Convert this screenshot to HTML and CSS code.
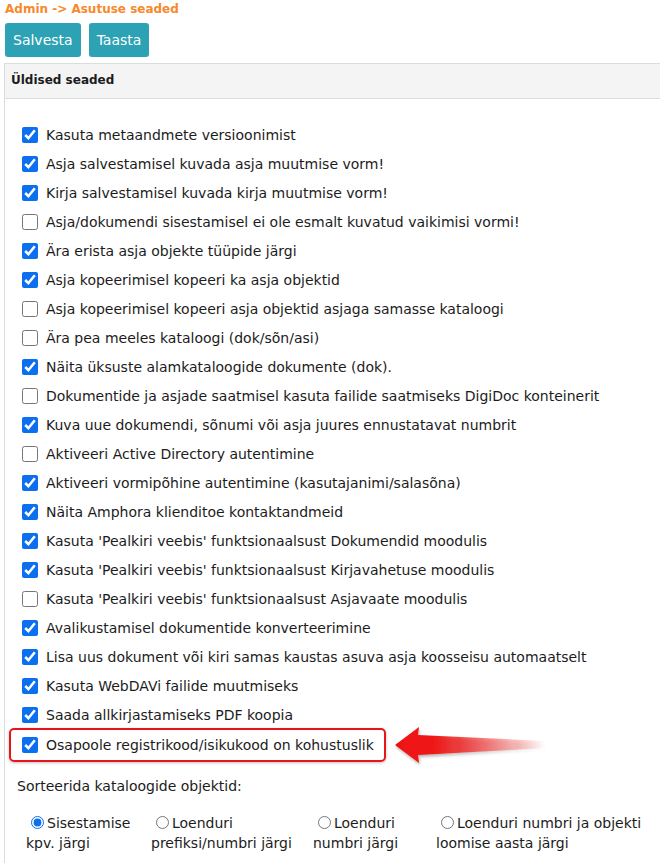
FILE: index.html
```html
<!DOCTYPE html>
<html lang="et">
<head>
    <meta charset="UTF-8">
    <title>Asutuse seaded</title>
    <link rel="stylesheet" href="styles.css">
</head>
<body>
    <div class="crumb">Admin -&gt; Asutuse seaded</div>

    <!-- nupud -->
    <div class="toolbar">
        <button class="btn">Salvesta</button>
        <button class="btn">Taasta</button>
    </div>

    <div class="panel">
        <div class="panel-head">Üldised seaded</div>
        <div class="panel-body">
            <ul class="opts">
                <li><label><input type="checkbox" checked> Kasuta metaandmete versioonimist</label></li>
                <li><label><input type="checkbox" checked> Asja salvestamisel kuvada asja muutmise vorm!</label></li>
                <li><label><input type="checkbox" checked> Kirja salvestamisel kuvada kirja muutmise vorm!</label></li>
                <li><label><input type="checkbox"> Asja/dokumendi sisestamisel ei ole esmalt kuvatud vaikimisi vormi!</label></li>
                <li><label><input type="checkbox" checked> Ära erista asja objekte tüüpide järgi</label></li>
                <li><label><input type="checkbox" checked> Asja kopeerimisel kopeeri ka asja objektid</label></li>
                <li><label><input type="checkbox"> Asja kopeerimisel kopeeri asja objektid asjaga samasse kataloogi</label></li>
                <li><label><input type="checkbox"> Ära pea meeles kataloogi (dok/sõn/asi)</label></li>
                <li><label><input type="checkbox" checked> Näita üksuste alamkataloogide dokumente (dok).</label></li>
                <li><label><input type="checkbox"> Dokumentide ja asjade saatmisel kasuta failide saatmiseks DigiDoc konteinerit</label></li>
                <li><label><input type="checkbox" checked> Kuva uue dokumendi, sõnumi või asja juures ennustatavat numbrit</label></li>
                <li><label><input type="checkbox"> Aktiveeri Active Directory autentimine</label></li>
                <li><label><input type="checkbox" checked> Aktiveeri vormipõhine autentimine (kasutajanimi/salasõna)</label></li>
                <li><label><input type="checkbox" checked> Näita Amphora klienditoe kontaktandmeid</label></li>
                <li><label><input type="checkbox" checked> Kasuta 'Pealkiri veebis' funktsionaalsust Dokumendid moodulis</label></li>
                <li><label><input type="checkbox" checked> Kasuta 'Pealkiri veebis' funktsionaalsust Kirjavahetuse moodulis</label></li>
                <li><label><input type="checkbox"> Kasuta 'Pealkiri veebis' funktsionaalsust Asjavaate moodulis</label></li>
                <li><label><input type="checkbox" checked> Avalikustamisel dokumentide konverteerimine</label></li>
                <li><label><input type="checkbox" checked> Lisa uus dokument või kiri samas kaustas asuva asja koosseisu automaatselt</label></li>
                <li><label><input type="checkbox" checked> Kasuta WebDAVi failide muutmiseks</label></li>
                <li><label><input type="checkbox" checked> Saada allkirjastamiseks PDF koopia</label></li>
                <li class="marked">
                    <label><input type="checkbox" checked> Osapoole registrikood/isikukood on kohustuslik</label>
                    <!-- punane nool -->
                    <svg class="arrow" width="160" height="50" viewBox="0 0 160 50">
                        <defs>
                            <linearGradient id="fade" x1="0" x2="1" y1="0" y2="0">
                                <stop offset="0" stop-color="#ee1111"/>
                                <stop offset="0.25" stop-color="#ee1515"/>
                                <stop offset="1" stop-color="#ee1515" stop-opacity="0"/>
                            </linearGradient>
                            <filter id="shade" x="-10%" y="-30%" width="130%" height="160%">
                                <feDropShadow dx="1" dy="2" stdDeviation="1.5" flood-color="#000" flood-opacity="0.3"/>
                            </filter>
                        </defs>
                        <path d="M2 25 L26 7 L25 15 L152 21 L152 28 L25 35 L26 43 Z" fill="url(#fade)" filter="url(#shade)"/>
                    </svg>
                </li>
            </ul>

            <div class="sort-title">Sorteerida kataloogide objektid:</div>

            <div class="sort-row">
                <label><input type="radio" name="sort" checked>Sisestamise kpv. järgi</label>
                <label><input type="radio" name="sort">Loenduri prefiksi/numbri järgi</label>
                <label><input type="radio" name="sort">Loenduri numbri järgi</label>
                <label><input type="radio" name="sort">Loenduri numbri ja objekti loomise aasta järgi</label>
            </div>
        </div>
    </div>
</body>
</html>
```

FILE: styles.css
```css
/* põhi */
* {
    box-sizing: border-box;
}

body {
    margin: 0;
    padding: 0 0 0 4px;
    font-family: "DejaVu Sans", Verdana, sans-serif;
    color: #1c1c1c;
    background: #fff;
    overflow: hidden;
}

/* leivapuru */
.crumb {
    color: #f7892c;
    font-weight: bold;
    font-size: 12px;
    padding: 2px 0 0 1px;
    height: 21px;
}

/* nupud */
.toolbar {
    display: flex;
    gap: 8px;
    padding-left: 1px;
    margin-top: 2px;
}

.btn {
    background: #2ca2b4;
    color: #fff;
    border: none;
    border-radius: 3px;
    height: 34px;
    padding: 0 8px;
    font-family: inherit;
    font-size: 14px;
}

/* paneel – parem serv jääb kaadrist välja */
.panel {
    margin-top: 6px;
    border: 1px solid #dcdcdc;
    border-right: none;
}

.panel-head {
    height: 35px;
    background: #f4f4f4;
    border-bottom: 1px solid #dcdcdc;
    padding: 9px 0 0 6px;
    font-weight: bold;
    font-size: 12px;
}

.panel-body {
    padding: 21px 0 40px 12px;
}

/* märkeruudud */
.opts {
    list-style: none;
    margin: 0;
    padding: 0 0 0 1px;
}

.opts li {
    height: 29.05px;
    display: flex;
    align-items: center;
}

.opts label {
    display: flex;
    align-items: center;
    gap: 8px;
    font-size: 14px;
    white-space: nowrap;
}

.opts input {
    width: 16px;
    height: 16px;
    margin: 0 0 0 4px;
    accent-color: #0b6ff0;
}

.marked {
    position: relative;
}

.marked label {
    position: relative;
}

.marked label::after {
    content: "";
    position: absolute;
    left: -9px;
    right: -12px;
    top: -9px;
    bottom: -9px;
    border: 2px solid #e8141b;
    border-radius: 5px;
    box-shadow: 0 1px 3px rgba(0, 0, 0, 0.25);
}

.arrow {
    position: absolute;
    left: 375px;
    top: -10px;
}

/* sorteerimine */
.sort-title {
    margin-top: 19px;
    font-size: 14px;
}

.sort-row {
    display: grid;
    grid-template-columns: 125px 162px 123px 212px;
    margin-top: 19px;
    padding-left: 9px;
    font-size: 14px;
    line-height: 20px;
}

.sort-row input {
    width: 13px;
    height: 13px;
    margin: 0 3px 0 5px;
    vertical-align: -1px;
    accent-color: #0b6ff0;
}
```
